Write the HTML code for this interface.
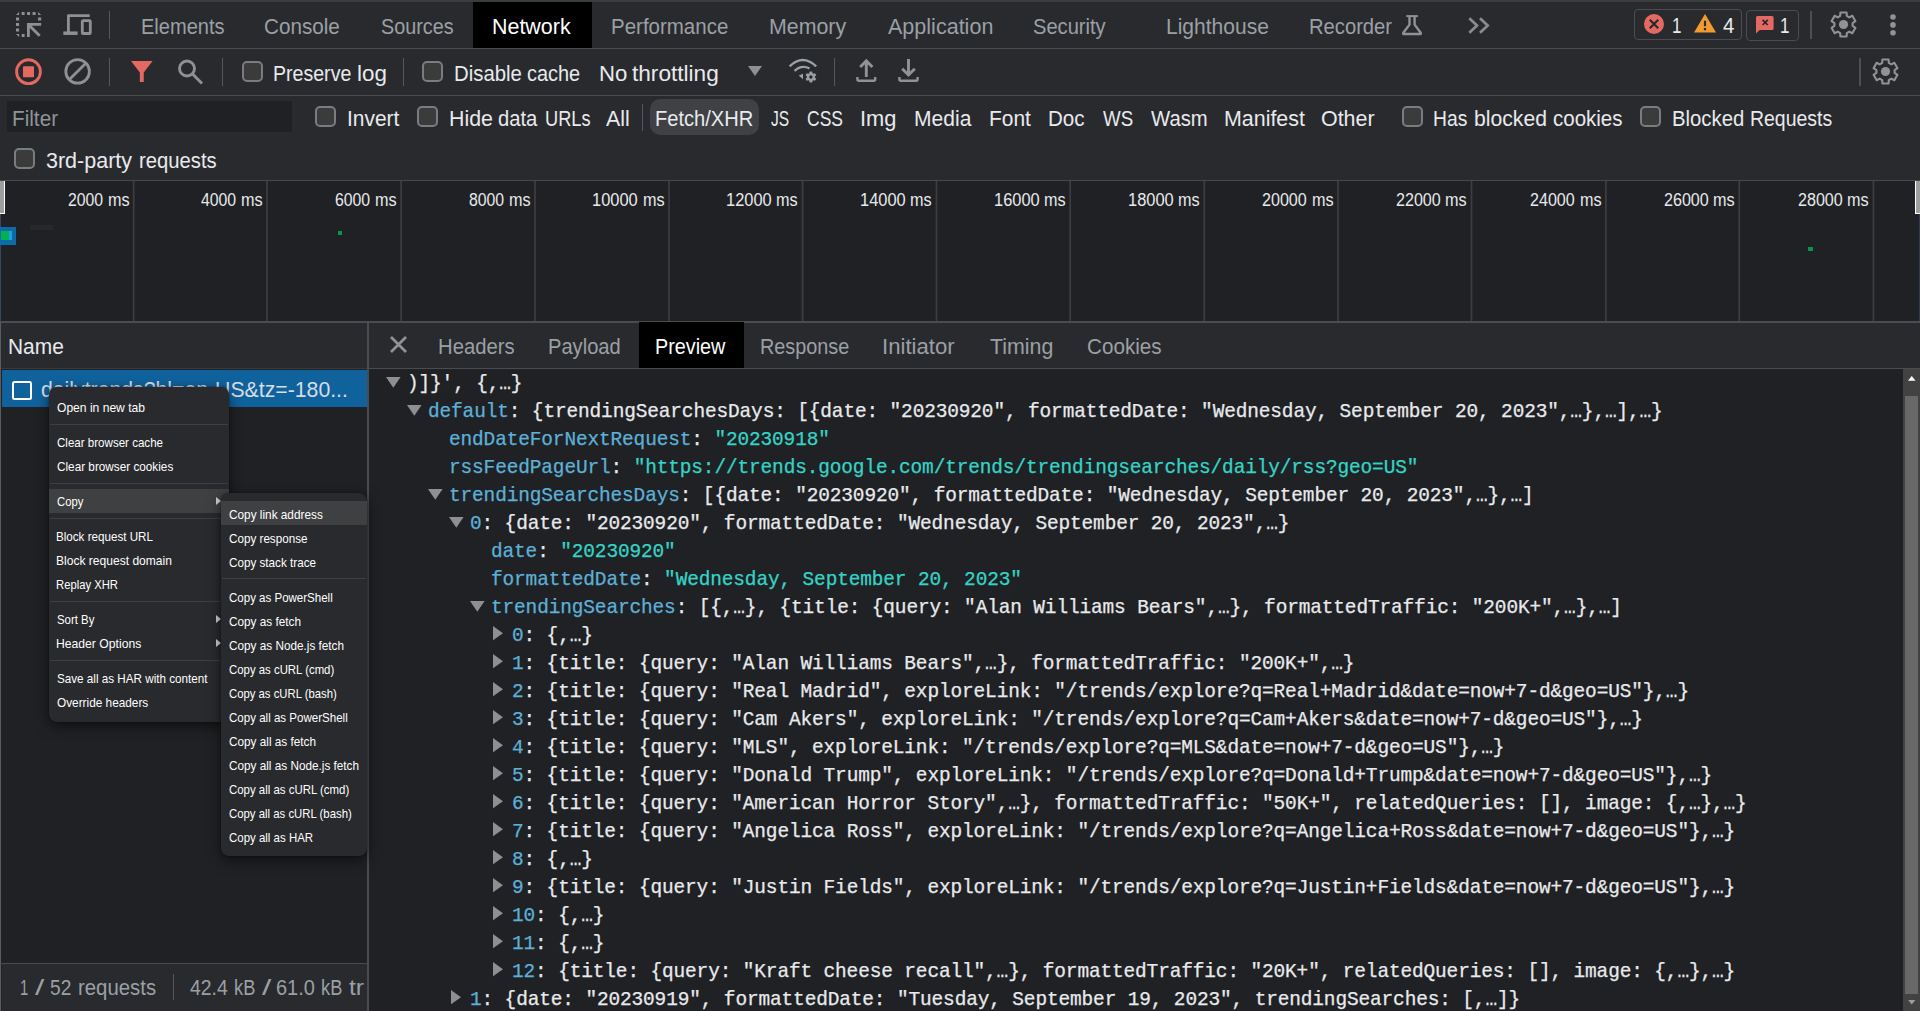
<!DOCTYPE html>
<html lang="en"><head><meta charset="utf-8"><title>DevTools - Network</title>
<style>
html,body{margin:0;padding:0;background:#202124;overflow:hidden}
body{width:1920px;height:1011px;position:relative;font-family:"Liberation Sans",sans-serif;color:#e8eaed}
.a{position:absolute}
.t{position:absolute;white-space:pre;line-height:28px;height:28px;font-family:"Liberation Sans",sans-serif;transform-origin:0 0}
.jr{position:absolute;white-space:pre;line-height:28px;height:28px;font-family:"Liberation Mono",monospace;font-size:19.45px;letter-spacing:-0.1259px;-webkit-text-stroke-width:0.25px}
.tri{position:absolute;fill:#8e8f91}
.bar{position:absolute;left:0;width:1920px;background:#292a2d}
.hl{position:absolute;background:#494c50}
.vd{position:absolute;width:1px;background:#54575b}
.cb{position:absolute;width:17px;height:17px;border:2px solid #797c80;border-radius:5px;background:#3b3b3c}
.gl{position:absolute;top:181px;width:2px;height:140px;background:#37383b}
.menu{position:absolute;background:#292a2d;border-radius:8px;box-shadow:0 4px 14px rgba(0,0,0,.55),0 0 2px rgba(0,0,0,.5)}
.sep{position:absolute;left:1px;right:1px;height:1px;background:#3c3f43}
.mh{position:absolute;left:0;right:0;height:24px;background:#3f4042}
svg{position:absolute;overflow:visible}
</style></head><body>
<!-- ===== main toolbar ===== -->
<div class="bar" style="top:0;height:48px"></div>
<div class="a" style="left:0;top:0;width:1920px;height:2px;background:#383d3d"></div>
<div class="a" style="left:473px;top:2px;width:119px;height:45.700px;background:#000"></div>
<div class="vd" style="left:109px;top:11px;height:28px"></div>
<div class="vd" style="left:1810px;top:11px;height:28px;width:2px;background:#4b4e52"></div>
<!-- icons row1 -->
<svg style="left:15.800px;top:12px" width="25.200" height="25" viewBox="0 0 25.2 25" fill="#8f9093"><path d="M3.100 0V3H0ZM5.700 0h2.900v3h-2.900ZM11.100 0h3v3h-3ZM16.600 0h3v3h-3ZM22.100 0L25.200 3h-3.100ZM0 5.500h3.100v2.900H0ZM0 11h3.100v3H0ZM0 16.500h3.100v2.900H0ZM0 22h3.100v3ZM22.100 5.500h3.100v2.900h-3.100ZM5.700 22h2.900v3h-2.900ZM11 10.900H25.200V13.700H15.600L24.700 22.800L22.700 24.800L13.800 15.900V25H11Z"/></svg>
<svg style="left:63px;top:14px" width="29" height="21" viewBox="0 0 29 21" fill="none" stroke="#8f9093" stroke-width="2.800"><path d="M5.400 18V1.700H26.700" stroke-linejoin="round"/><path d="M0.300 19.200H14.600" stroke-width="3.500"/><rect x="19.300" y="6.700" width="8" height="12.800" rx="0.800"/></svg>
<svg style="left:1401px;top:14px" width="22" height="22" viewBox="0 0 22 22" fill="none" stroke="#919294" stroke-linejoin="round"><path d="M5.300 2.100H16.900" stroke-width="2"/><path d="M8.500 2.500V10.600L2.300 18.800Q1.500 20 3 20H19Q20.500 20 19.700 18.800L13.600 10.600V2.500" stroke-width="2.400"/></svg>
<svg style="left:1466.500px;top:16px" width="24" height="20" viewBox="0 0 24 20" fill="none" stroke="#8b8c8e" stroke-width="2.700"><path d="M2.300 2.200L10 9.500L2.300 16.800M13 2.200L20.700 9.500L13 16.800"/></svg>
<!-- counters -->
<div class="a" style="left:1634px;top:9px;width:106px;height:29px;border:1px solid #4a4c50;border-radius:4px"></div>
<div class="a" style="left:1746px;top:10px;width:51px;height:28.500px;border:1px solid #4a4c50;border-radius:4px"></div>
<svg style="left:1644px;top:14px" width="20" height="20" viewBox="0 0 20 20"><circle cx="10" cy="10" r="10" fill="#e46962"/><path d="M5.8 5.8L14.2 14.2M14.2 5.8L5.8 14.2" stroke="#292a2d" stroke-width="2.2"/></svg>
<svg style="left:1694px;top:14.300px" width="22" height="18.500" preserveAspectRatio="none" viewBox="0 0 22 18"><path d="M11 0L22 18H0Z" fill="#f29b30"/><path d="M11 6.5V12M11 13.6V15.8" stroke="#292a2d" stroke-width="2.2"/></svg>
<svg style="left:1755.800px;top:16px" width="17.600" height="17.500" viewBox="0 0 17.6 17.5"><path d="M1.500 0H16.100Q17.600 0 17.600 1.500V12.500Q17.600 14 16.100 14H3.700L0 17.500V1.500Q0 0 1.500 0Z" fill="#e46962"/><path d="M6.600 3.800L11.800 9M11.800 3.800L6.600 9" stroke="#292a2d" stroke-width="1.700"/></svg>
<svg style="left:1830px;top:11px" width="27" height="27" viewBox="0 0 27 27"><path d="M16.80 4.91L16.60 1.49L10.40 1.49L10.20 4.91L7.71 6.35L4.66 4.81L1.55 10.19L4.41 12.06L4.41 14.94L1.55 16.81L4.66 22.19L7.71 20.65L10.20 22.09L10.40 25.51L16.60 25.51L16.80 22.09L19.29 20.65L22.34 22.19L25.45 16.81L22.59 14.94L22.59 12.06L25.45 10.19L22.34 4.81L19.29 6.35Z" fill="none" stroke="#919294" stroke-width="2.1" stroke-linejoin="round"/><circle cx="13.5" cy="13.5" r="4.6" fill="#919294"/></svg>
<svg style="left:1889.600px;top:13.600px" width="6" height="22" viewBox="0 0 6 22" fill="#919294"><circle cx="3" cy="3" r="2.8"/><circle cx="3" cy="10.900" r="2.8"/><circle cx="3" cy="18.800" r="2.8"/></svg>

<!-- ===== network toolbar ===== -->
<div class="bar" style="top:48px;height:47px"></div>
<svg style="left:15px;top:58px" width="27" height="27" viewBox="0 0 27 27"><circle cx="13.5" cy="13.700" r="11.900" fill="none" stroke="#e46962" stroke-width="2.900"/><rect x="8" y="8.200" width="11" height="11" rx="0.800" fill="#e46962"/></svg>
<svg style="left:64px;top:58.200px" width="27" height="27" viewBox="0 0 27 27" fill="none" stroke="#8f9093" stroke-width="2.800"><circle cx="13.600" cy="13.400" r="11.800"/><path d="M5.400 21.600L21.800 5.200"/></svg>
<div class="vd" style="left:109px;top:58px;height:28px"></div>
<svg style="left:130.700px;top:61px" width="21.600" height="21" viewBox="0 0 21.6 21"><path d="M0 0H21.600L12.750 11.500V21H8.850V11.500Z" fill="#e46962"/></svg>
<svg style="left:178px;top:58.500px" width="26" height="26" viewBox="0 0 26 26" fill="none" stroke="#8f9093"><circle cx="9" cy="9.500" r="7.500" stroke-width="2.900"/><path d="M14.300 14.800L24 24.500" stroke-width="3"/></svg>
<div class="vd" style="left:222px;top:58px;height:28px"></div>
<div class="cb" style="left:242px;top:61px"></div>
<div class="vd" style="left:403px;top:58px;height:28px"></div>
<div class="cb" style="left:422px;top:61px"></div>
<svg style="left:748px;top:66px" width="14" height="10" viewBox="0 0 14 10"><path d="M0 0H14L7 10Z" fill="#8f9093"/></svg>
<svg style="left:788px;top:58px" width="30" height="26" viewBox="0 0 30 26"><path d="M1.600 8.300Q14.700 -4.200 28.200 8.300" fill="none" stroke="#9aa0a6" stroke-width="2.400"/><path d="M6.600 13Q13 6.500 21.500 10.300" fill="none" stroke="#9aa0a6" stroke-width="2.400"/><path d="M10.700 17.400L15 15.800V21.200Z" fill="#9aa0a6"/><path d="M24.53 15.35L24.16 13.54L21.64 13.54L21.27 15.35L20.55 15.76L18.80 15.18L17.54 17.36L18.92 18.58L18.92 19.42L17.54 20.64L18.80 22.82L20.55 22.24L21.27 22.65L21.64 24.46L24.16 24.46L24.53 22.65L25.25 22.24L27.00 22.82L28.26 20.64L26.88 19.42L26.88 18.58L28.26 17.36L27.00 15.18L25.25 15.76ZM24.600 19a1.700 1.700 0 1 0 -3.400 0a1.700 1.700 0 1 0 3.400 0Z" fill="#9aa0a6" fill-rule="evenodd"/></svg>
<div class="vd" style="left:834px;top:58px;height:28px"></div>
<svg style="left:855px;top:58px" width="23" height="25" viewBox="0 0 23 25" fill="none" stroke="#919294"><path d="M11.300 19V2.500M5.200 9L11.300 2.900L17.400 9" stroke-width="2.900"/><path d="M2.400 19V21.300Q2.400 22.800 3.900 22.800H18.700Q20.200 22.800 20.200 21.300V19" stroke-width="2.400"/></svg>
<svg style="left:897px;top:58px" width="23" height="25" viewBox="0 0 23 25" fill="none" stroke="#919294"><path d="M11.500 1V17M5.200 10.700L11.500 17L17.800 10.700" stroke-width="2.900"/><path d="M2.400 19V21.300Q2.400 22.800 3.900 22.800H19.100Q20.600 22.800 20.600 21.300V19" stroke-width="2.400"/></svg>
<div class="vd" style="left:1859px;top:58px;height:28px;width:2px;background:#4b4e52"></div>
<svg style="left:1872px;top:58px" width="27" height="27" viewBox="0 0 27 27"><path d="M16.80 4.91L16.60 1.49L10.40 1.49L10.20 4.91L7.71 6.35L4.66 4.81L1.55 10.19L4.41 12.06L4.41 14.94L1.55 16.81L4.66 22.19L7.71 20.65L10.20 22.09L10.40 25.51L16.60 25.51L16.80 22.09L19.29 20.65L22.34 22.19L25.45 16.81L22.59 14.94L22.59 12.06L25.45 10.19L22.34 4.81L19.29 6.35Z" fill="none" stroke="#919294" stroke-width="2.1" stroke-linejoin="round"/><circle cx="13.5" cy="13.5" r="4.6" fill="#919294"/></svg>

<!-- ===== filter bar ===== -->
<div class="bar" style="top:96px;height:84px"></div>
<div class="a" style="left:7px;top:101px;width:285px;height:31px;background:#202124"></div>
<div class="cb" style="left:315px;top:106px"></div>
<div class="cb" style="left:417px;top:106px"></div>
<div class="vd" style="left:642px;top:104px;height:27px"></div>
<div class="a" style="left:650px;top:99px;width:109px;height:36px;border-radius:10px;background:#404144"></div>
<div class="cb" style="left:1402px;top:106px"></div>
<div class="cb" style="left:1640px;top:106px"></div>
<div class="cb" style="left:14px;top:148px"></div>

<div class="hl" style="left:0;top:48px;width:1920px;height:1px"></div>
<div class="hl" style="left:0;top:95px;width:1920px;height:1px"></div>
<!-- ===== timeline overview ===== -->
<div class="hl" style="left:0;top:180px;width:1920px;height:1px;background:#46494d"></div>
<div class="a" style="left:0;top:181px;width:1920px;height:140px;background:#202124"></div>
<svg style="left:0;top:181px" width="1920" height="140" viewBox="0 0 1920 140" fill="#3c3d41"><rect x="132.80" y="0" width="1.75" height="140"/><rect x="266.10" y="0" width="1.75" height="140"/><rect x="400.30" y="0" width="1.75" height="140"/><rect x="534.10" y="0" width="1.75" height="140"/><rect x="668.10" y="0" width="1.75" height="140"/><rect x="801.70" y="0" width="1.75" height="140"/><rect x="935.60" y="0" width="1.75" height="140"/><rect x="1069.30" y="0" width="1.75" height="140"/><rect x="1203.40" y="0" width="1.75" height="140"/><rect x="1337.10" y="0" width="1.75" height="140"/><rect x="1470.60" y="0" width="1.75" height="140"/><rect x="1605.00" y="0" width="1.75" height="140"/><rect x="1738.40" y="0" width="1.75" height="140"/><rect x="1872.60" y="0" width="1.75" height="140"/></svg>
<div class="a" style="left:0;top:181px;width:4px;height:32px;background:#9e9e9e;border-right:1px solid #fff;border-bottom:1px solid #fff"></div>
<div class="a" style="left:1915px;top:181px;width:5px;height:32px;background:#9e9e9e;border-left:1px solid #fff;border-bottom:1px solid #fff"></div>
<div class="a" style="left:1919px;top:214px;width:1px;height:107px;background:#2c3b5a"></div>
<div class="a" style="left:0;top:214px;width:1px;height:107px;background:#364763"></div>
<div class="a" style="left:0;top:227px;width:15.5px;height:18px;background:#0f6aa8"></div>
<div class="a" style="left:1px;top:231px;width:7.5px;height:8.5px;background:#00b14f"></div>
<div class="a" style="left:8.5px;top:231px;width:3.2px;height:8.5px;background:#1ba1e9"></div>
<div class="a" style="left:30px;top:225px;width:23px;height:4.500px;background:#27282b"></div>
<div class="a" style="left:337.500px;top:230.500px;width:4.500px;height:4px;background:#00994a"></div>
<div class="a" style="left:1808px;top:246.500px;width:4.500px;height:4px;background:#00994a"></div>

<!-- ===== request list (left) ===== -->
<div class="hl" style="left:0;top:321px;width:1920px;height:1.5px"></div>
<div class="a" style="left:0;top:322.500px;width:367px;height:46px;background:#292a2d"></div>
<div class="hl" style="left:0;top:368px;width:367px;height:1px;background:#3a3b3f"></div>
<div class="a" style="left:1.5px;top:369.500px;width:365.5px;height:37.500px;background:#10629d"></div>
<div class="a" style="left:12px;top:381px;width:16px;height:14.500px;border:2px solid #fff;border-radius:2.5px"></div>
<div class="a" style="left:0;top:322px;width:1px;height:689px;background:#595c60"></div>
<div class="hl" style="left:367px;top:322px;width:2px;height:689px"></div>
<div class="a" style="left:1.5px;top:963px;width:365.5px;height:48px;background:#292a2d"></div>
<div class="hl" style="left:0;top:963px;width:367px;height:1px"></div>
<div class="vd" style="left:173px;top:974px;height:26px"></div>

<!-- ===== detail pane (right) ===== -->
<div class="a" style="left:369px;top:322.500px;width:1551px;height:45.500px;background:#292a2d"></div>
<div class="a" style="left:639px;top:322px;width:105px;height:46px;background:#000"></div>
<div class="hl" style="left:369px;top:368px;width:1551px;height:1.2px"></div>
<svg style="left:390px;top:336px" width="17" height="17" viewBox="0 0 17 17" stroke="#919294" stroke-width="2.800" fill="none"><path d="M1 1L16 16M16 1L1 16"/></svg>
<!-- scrollbar -->
<div class="a" style="left:1903px;top:369px;width:17px;height:642px;background:#424242"></div>
<div class="a" style="left:1905px;top:396px;width:13px;height:598px;background:#686868"></div>
<svg style="left:1907.800px;top:375.500px" width="7.5" height="4.700" viewBox="0 0 8 5"><path d="M0 5H8L4 0Z" fill="#fff"/></svg>
<svg style="left:1907.800px;top:1000px" width="7.5" height="4.500" viewBox="0 0 8 5"><path d="M0 0H8L4 5Z" fill="#9e9e9e"/></svg>

<svg class="tri" style="left:385.5px;top:377.2px" width="14.6" height="10.8" viewBox="0 0 14 10" preserveAspectRatio="none"><path d="M0 0H14L7 10Z"/></svg><div class="jr" style="left:407px;top:370px"><span style="color:#e8eaed">)]}&#x27;, {,…}</span></div>
<svg class="tri" style="left:406.5px;top:405.2px" width="14.6" height="10.8" viewBox="0 0 14 10" preserveAspectRatio="none"><path d="M0 0H14L7 10Z"/></svg><div class="jr" style="left:428px;top:398px"><span style="color:#5db0d7">default</span><span style="color:#e8eaed">: {trendingSearchesDays: [{date: &quot;20230920&quot;, formattedDate: &quot;Wednesday, September 20, 2023&quot;,…},…],…}</span></div>
<div class="jr" style="left:449px;top:426px"><span style="color:#5db0d7">endDateForNextRequest</span><span style="color:#e8eaed">: </span><span style="color:#35d4c7">&quot;20230918&quot;</span></div>
<div class="jr" style="left:449px;top:454px"><span style="color:#5db0d7">rssFeedPageUrl</span><span style="color:#e8eaed">: </span><span style="color:#35d4c7">&quot;https://trends.google.com/trends/trendingsearches/daily/rss?geo=US&quot;</span></div>
<svg class="tri" style="left:427.5px;top:489.2px" width="14.6" height="10.8" viewBox="0 0 14 10" preserveAspectRatio="none"><path d="M0 0H14L7 10Z"/></svg><div class="jr" style="left:449px;top:482px"><span style="color:#5db0d7">trendingSearchesDays</span><span style="color:#e8eaed">: [{date: &quot;20230920&quot;, formattedDate: &quot;Wednesday, September 20, 2023&quot;,…},…]</span></div>
<svg class="tri" style="left:448.5px;top:517.2px" width="14.6" height="10.8" viewBox="0 0 14 10" preserveAspectRatio="none"><path d="M0 0H14L7 10Z"/></svg><div class="jr" style="left:470px;top:510px"><span style="color:#5db0d7">0</span><span style="color:#e8eaed">: {date: &quot;20230920&quot;, formattedDate: &quot;Wednesday, September 20, 2023&quot;,…}</span></div>
<div class="jr" style="left:491px;top:538px"><span style="color:#5db0d7">date</span><span style="color:#e8eaed">: </span><span style="color:#35d4c7">&quot;20230920&quot;</span></div>
<div class="jr" style="left:491px;top:566px"><span style="color:#5db0d7">formattedDate</span><span style="color:#e8eaed">: </span><span style="color:#35d4c7">&quot;Wednesday, September 20, 2023&quot;</span></div>
<svg class="tri" style="left:469.5px;top:601.2px" width="14.6" height="10.8" viewBox="0 0 14 10" preserveAspectRatio="none"><path d="M0 0H14L7 10Z"/></svg><div class="jr" style="left:491px;top:594px"><span style="color:#5db0d7">trendingSearches</span><span style="color:#e8eaed">: [{,…}, {title: {query: &quot;Alan Williams Bears&quot;,…}, formattedTraffic: &quot;200K+&quot;,…},…]</span></div>
<svg class="tri" style="left:493px;top:626px" width="10" height="14.3" viewBox="0 0 10 14" preserveAspectRatio="none"><path d="M0 0L10 7L0 14Z"/></svg><div class="jr" style="left:512px;top:622px"><span style="color:#5db0d7">0</span><span style="color:#e8eaed">: {,…}</span></div>
<svg class="tri" style="left:493px;top:654px" width="10" height="14.3" viewBox="0 0 10 14" preserveAspectRatio="none"><path d="M0 0L10 7L0 14Z"/></svg><div class="jr" style="left:512px;top:650px"><span style="color:#5db0d7">1</span><span style="color:#e8eaed">: {title: {query: &quot;Alan Williams Bears&quot;,…}, formattedTraffic: &quot;200K+&quot;,…}</span></div>
<svg class="tri" style="left:493px;top:682px" width="10" height="14.3" viewBox="0 0 10 14" preserveAspectRatio="none"><path d="M0 0L10 7L0 14Z"/></svg><div class="jr" style="left:512px;top:678px"><span style="color:#5db0d7">2</span><span style="color:#e8eaed">: {title: {query: &quot;Real Madrid&quot;, exploreLink: &quot;/trends/explore?q=Real+Madrid&amp;date=now+7-d&amp;geo=US&quot;},…}</span></div>
<svg class="tri" style="left:493px;top:710px" width="10" height="14.3" viewBox="0 0 10 14" preserveAspectRatio="none"><path d="M0 0L10 7L0 14Z"/></svg><div class="jr" style="left:512px;top:706px"><span style="color:#5db0d7">3</span><span style="color:#e8eaed">: {title: {query: &quot;Cam Akers&quot;, exploreLink: &quot;/trends/explore?q=Cam+Akers&amp;date=now+7-d&amp;geo=US&quot;},…}</span></div>
<svg class="tri" style="left:493px;top:738px" width="10" height="14.3" viewBox="0 0 10 14" preserveAspectRatio="none"><path d="M0 0L10 7L0 14Z"/></svg><div class="jr" style="left:512px;top:734px"><span style="color:#5db0d7">4</span><span style="color:#e8eaed">: {title: {query: &quot;MLS&quot;, exploreLink: &quot;/trends/explore?q=MLS&amp;date=now+7-d&amp;geo=US&quot;},…}</span></div>
<svg class="tri" style="left:493px;top:766px" width="10" height="14.3" viewBox="0 0 10 14" preserveAspectRatio="none"><path d="M0 0L10 7L0 14Z"/></svg><div class="jr" style="left:512px;top:762px"><span style="color:#5db0d7">5</span><span style="color:#e8eaed">: {title: {query: &quot;Donald Trump&quot;, exploreLink: &quot;/trends/explore?q=Donald+Trump&amp;date=now+7-d&amp;geo=US&quot;},…}</span></div>
<svg class="tri" style="left:493px;top:794px" width="10" height="14.3" viewBox="0 0 10 14" preserveAspectRatio="none"><path d="M0 0L10 7L0 14Z"/></svg><div class="jr" style="left:512px;top:790px"><span style="color:#5db0d7">6</span><span style="color:#e8eaed">: {title: {query: &quot;American Horror Story&quot;,…}, formattedTraffic: &quot;50K+&quot;, relatedQueries: [], image: {,…},…}</span></div>
<svg class="tri" style="left:493px;top:822px" width="10" height="14.3" viewBox="0 0 10 14" preserveAspectRatio="none"><path d="M0 0L10 7L0 14Z"/></svg><div class="jr" style="left:512px;top:818px"><span style="color:#5db0d7">7</span><span style="color:#e8eaed">: {title: {query: &quot;Angelica Ross&quot;, exploreLink: &quot;/trends/explore?q=Angelica+Ross&amp;date=now+7-d&amp;geo=US&quot;},…}</span></div>
<svg class="tri" style="left:493px;top:850px" width="10" height="14.3" viewBox="0 0 10 14" preserveAspectRatio="none"><path d="M0 0L10 7L0 14Z"/></svg><div class="jr" style="left:512px;top:846px"><span style="color:#5db0d7">8</span><span style="color:#e8eaed">: {,…}</span></div>
<svg class="tri" style="left:493px;top:878px" width="10" height="14.3" viewBox="0 0 10 14" preserveAspectRatio="none"><path d="M0 0L10 7L0 14Z"/></svg><div class="jr" style="left:512px;top:874px"><span style="color:#5db0d7">9</span><span style="color:#e8eaed">: {title: {query: &quot;Justin Fields&quot;, exploreLink: &quot;/trends/explore?q=Justin+Fields&amp;date=now+7-d&amp;geo=US&quot;},…}</span></div>
<svg class="tri" style="left:493px;top:906px" width="10" height="14.3" viewBox="0 0 10 14" preserveAspectRatio="none"><path d="M0 0L10 7L0 14Z"/></svg><div class="jr" style="left:512px;top:902px"><span style="color:#5db0d7">10</span><span style="color:#e8eaed">: {,…}</span></div>
<svg class="tri" style="left:493px;top:934px" width="10" height="14.3" viewBox="0 0 10 14" preserveAspectRatio="none"><path d="M0 0L10 7L0 14Z"/></svg><div class="jr" style="left:512px;top:930px"><span style="color:#5db0d7">11</span><span style="color:#e8eaed">: {,…}</span></div>
<svg class="tri" style="left:493px;top:962px" width="10" height="14.3" viewBox="0 0 10 14" preserveAspectRatio="none"><path d="M0 0L10 7L0 14Z"/></svg><div class="jr" style="left:512px;top:958px"><span style="color:#5db0d7">12</span><span style="color:#e8eaed">: {title: {query: &quot;Kraft cheese recall&quot;,…}, formattedTraffic: &quot;20K+&quot;, relatedQueries: [], image: {,…},…}</span></div>
<svg class="tri" style="left:451px;top:990px" width="10" height="14.3" viewBox="0 0 10 14" preserveAspectRatio="none"><path d="M0 0L10 7L0 14Z"/></svg><div class="jr" style="left:470px;top:986px"><span style="color:#5db0d7">1</span><span style="color:#e8eaed">: {date: &quot;20230919&quot;, formattedDate: &quot;Tuesday, September 19, 2023&quot;, trendingSearches: [,…]}</span></div>
<span class="t" style="left:140.76px;top:13.00px;font-size:21.3px;color:#9aa0a6;transform:scaleX(0.9412);">Elements</span>
<span class="t" style="left:264.03px;top:13.00px;font-size:21.3px;color:#9aa0a6;transform:scaleX(0.9699);">Console</span>
<span class="t" style="left:380.50px;top:13.00px;font-size:21.3px;color:#9aa0a6;transform:scaleX(0.9293);">Sources</span>
<span class="t" style="left:491.99px;top:13.00px;font-size:21.3px;color:#ffffff;transform:scaleX(1.0070);">Network</span>
<span class="t" style="left:611.04px;top:13.00px;font-size:21.3px;color:#9aa0a6;transform:scaleX(0.9619);">Performance</span>
<span class="t" style="left:768.50px;top:13.00px;font-size:21.3px;color:#9aa0a6;transform:scaleX(1.0031);">Memory</span>
<span class="t" style="left:888.00px;top:13.00px;font-size:21.3px;color:#9aa0a6;transform:scaleX(1.0112);">Application</span>
<span class="t" style="left:1033.00px;top:13.00px;font-size:21.3px;color:#9aa0a6;transform:scaleX(0.9446);">Security</span>
<span class="t" style="left:1166.01px;top:13.00px;font-size:21.3px;color:#9aa0a6;transform:scaleX(0.9867);">Lighthouse</span>
<span class="t" style="left:1309.05px;top:13.00px;font-size:21.3px;color:#9aa0a6;transform:scaleX(0.9480);">Recorder</span>
<span class="t" style="left:1671.70px;top:12.00px;font-size:21.3px;color:#e8eaed;transform:scaleX(0.8000);">1</span>
<span class="t" style="left:1722.50px;top:12.00px;font-size:21.3px;color:#e8eaed;transform:scaleX(0.9583);">4</span>
<span class="t" style="left:1780.20px;top:12.00px;font-size:21.3px;color:#e8eaed;transform:scaleX(0.8000);">1</span>
<span class="t" style="left:273.28px;top:60.00px;font-size:21.3px;color:#e8eaed;transform:scaleX(0.9187);">Preserve</span><span class="t" style="left:356.85px;top:60.00px;font-size:21.3px;color:#e8eaed;transform:scaleX(1.0498);">log</span>
<span class="t" style="left:453.54px;top:60.00px;font-size:21.3px;color:#e8eaed;transform:scaleX(0.9555);">Disable</span><span class="t" style="left:527.20px;top:60.00px;font-size:21.3px;color:#e8eaed;transform:scaleX(0.9360);">cache</span>
<span class="t" style="left:598.56px;top:60.00px;font-size:21.3px;color:#e8eaed;transform:scaleX(1.0402);">No</span><span class="t" style="left:632.10px;top:60.00px;font-size:21.3px;color:#e8eaed;transform:scaleX(1.0614);">throttling</span>
<span class="t" style="left:12.03px;top:105.00px;font-size:21.3px;color:#8f9499;transform:scaleX(0.9733);">Filter</span>
<span class="t" style="left:346.52px;top:105.00px;font-size:21.3px;color:#e8eaed;transform:scaleX(0.9838);">Invert</span>
<span class="t" style="left:448.60px;top:105.00px;font-size:21.3px;color:#e8eaed;transform:scaleX(1.0034);">Hide</span><span class="t" style="left:498.00px;top:105.00px;font-size:21.3px;color:#e8eaed;transform:scaleX(0.9494);">data</span><span class="t" style="left:544.54px;top:105.00px;font-size:21.3px;color:#e8eaed;transform:scaleX(0.8565);">URLs</span>
<span class="t" style="left:606.00px;top:105.00px;font-size:21.3px;color:#e8eaed;transform:scaleX(1.0028);">All</span>
<span class="t" style="left:655.06px;top:105.00px;font-size:21.3px;color:#e8eaed;transform:scaleX(0.9439);">Fetch/XHR</span>
<span class="t" style="left:771.00px;top:105.00px;font-size:21.3px;color:#e8eaed;transform:scaleX(0.7303);">JS</span>
<span class="t" style="left:806.68px;top:105.00px;font-size:21.3px;color:#e8eaed;transform:scaleX(0.8219);">CSS</span>
<span class="t" style="left:859.97px;top:105.00px;font-size:21.3px;color:#e8eaed;transform:scaleX(1.0250);">Img</span>
<span class="t" style="left:913.51px;top:105.00px;font-size:21.3px;color:#e8eaed;transform:scaleX(0.9884);">Media</span>
<span class="t" style="left:989.02px;top:105.00px;font-size:21.3px;color:#e8eaed;transform:scaleX(0.9833);">Font</span>
<span class="t" style="left:1048.03px;top:105.00px;font-size:21.3px;color:#e8eaed;transform:scaleX(0.9671);">Doc</span>
<span class="t" style="left:1102.50px;top:105.00px;font-size:21.3px;color:#e8eaed;transform:scaleX(0.8797);">WS</span>
<span class="t" style="left:1151.00px;top:105.00px;font-size:21.3px;color:#e8eaed;transform:scaleX(0.9523);">Wasm</span>
<span class="t" style="left:1223.99px;top:105.00px;font-size:21.3px;color:#e8eaed;transform:scaleX(1.0054);">Manifest</span>
<span class="t" style="left:1321.49px;top:105.00px;font-size:21.3px;color:#e8eaed;transform:scaleX(1.0063);">Other</span>
<span class="t" style="left:1433.39px;top:105.00px;font-size:21.3px;color:#e8eaed;transform:scaleX(0.9055);">Has</span><span class="t" style="left:1473.81px;top:105.00px;font-size:21.3px;color:#e8eaed;transform:scaleX(0.9936);">blocked</span><span class="t" style="left:1553.00px;top:105.00px;font-size:21.3px;color:#e8eaed;transform:scaleX(0.9628);">cookies</span>
<span class="t" style="left:1671.75px;top:105.00px;font-size:21.3px;color:#e8eaed;transform:scaleX(0.9537);">Blocked</span><span class="t" style="left:1750.49px;top:105.00px;font-size:21.3px;color:#e8eaed;transform:scaleX(0.9126);">Requests</span>
<span class="t" style="left:46.10px;top:147.00px;font-size:21.3px;color:#e8eaed;transform:scaleX(1.0097);">3rd-party</span><span class="t" style="left:139.05px;top:147.00px;font-size:21.3px;color:#e8eaed;transform:scaleX(0.9508);">requests</span>
<span class="t" style="left:67.60px;top:186.00px;font-size:17.5px;color:#e8eaed;transform:scaleX(0.9031);">2000</span><span class="t" style="left:107.57px;top:186.00px;font-size:17.5px;color:#e8eaed;transform:scaleX(0.9257);">ms</span>
<span class="t" style="left:200.90px;top:186.00px;font-size:17.5px;color:#e8eaed;transform:scaleX(0.9031);">4000</span><span class="t" style="left:240.87px;top:186.00px;font-size:17.5px;color:#e8eaed;transform:scaleX(0.9257);">ms</span>
<span class="t" style="left:335.10px;top:186.00px;font-size:17.5px;color:#e8eaed;transform:scaleX(0.9031);">6000</span><span class="t" style="left:375.07px;top:186.00px;font-size:17.5px;color:#e8eaed;transform:scaleX(0.9257);">ms</span>
<span class="t" style="left:468.90px;top:186.00px;font-size:17.5px;color:#e8eaed;transform:scaleX(0.9031);">8000</span><span class="t" style="left:508.87px;top:186.00px;font-size:17.5px;color:#e8eaed;transform:scaleX(0.9257);">ms</span>
<span class="t" style="left:592.36px;top:186.00px;font-size:17.5px;color:#e8eaed;transform:scaleX(0.9389);">10000</span><span class="t" style="left:642.87px;top:186.00px;font-size:17.5px;color:#e8eaed;transform:scaleX(0.9257);">ms</span>
<span class="t" style="left:725.96px;top:186.00px;font-size:17.5px;color:#e8eaed;transform:scaleX(0.9389);">12000</span><span class="t" style="left:776.47px;top:186.00px;font-size:17.5px;color:#e8eaed;transform:scaleX(0.9257);">ms</span>
<span class="t" style="left:859.86px;top:186.00px;font-size:17.5px;color:#e8eaed;transform:scaleX(0.9389);">14000</span><span class="t" style="left:910.37px;top:186.00px;font-size:17.5px;color:#e8eaed;transform:scaleX(0.9257);">ms</span>
<span class="t" style="left:993.56px;top:186.00px;font-size:17.5px;color:#e8eaed;transform:scaleX(0.9389);">16000</span><span class="t" style="left:1044.07px;top:186.00px;font-size:17.5px;color:#e8eaed;transform:scaleX(0.9257);">ms</span>
<span class="t" style="left:1127.66px;top:186.00px;font-size:17.5px;color:#e8eaed;transform:scaleX(0.9389);">18000</span><span class="t" style="left:1178.17px;top:186.00px;font-size:17.5px;color:#e8eaed;transform:scaleX(0.9257);">ms</span>
<span class="t" style="left:1262.30px;top:186.00px;font-size:17.5px;color:#e8eaed;transform:scaleX(0.9197);">20000</span><span class="t" style="left:1311.87px;top:186.00px;font-size:17.5px;color:#e8eaed;transform:scaleX(0.9257);">ms</span>
<span class="t" style="left:1395.80px;top:186.00px;font-size:17.5px;color:#e8eaed;transform:scaleX(0.9197);">22000</span><span class="t" style="left:1445.37px;top:186.00px;font-size:17.5px;color:#e8eaed;transform:scaleX(0.9257);">ms</span>
<span class="t" style="left:1530.20px;top:186.00px;font-size:17.5px;color:#e8eaed;transform:scaleX(0.9197);">24000</span><span class="t" style="left:1579.77px;top:186.00px;font-size:17.5px;color:#e8eaed;transform:scaleX(0.9257);">ms</span>
<span class="t" style="left:1663.60px;top:186.00px;font-size:17.5px;color:#e8eaed;transform:scaleX(0.9197);">26000</span><span class="t" style="left:1713.17px;top:186.00px;font-size:17.5px;color:#e8eaed;transform:scaleX(0.9257);">ms</span>
<span class="t" style="left:1797.80px;top:186.00px;font-size:17.5px;color:#e8eaed;transform:scaleX(0.9197);">28000</span><span class="t" style="left:1847.37px;top:186.00px;font-size:17.5px;color:#e8eaed;transform:scaleX(0.9257);">ms</span>
<span class="t" style="left:8.02px;top:333.00px;font-size:21.3px;color:#e8eaed;transform:scaleX(0.9824);">Name</span>
<span class="t" style="left:438.05px;top:333.00px;font-size:21.3px;color:#9aa0a6;transform:scaleX(0.9512);">Headers</span>
<span class="t" style="left:548.05px;top:333.00px;font-size:21.3px;color:#9aa0a6;transform:scaleX(0.9452);">Payload</span>
<span class="t" style="left:655.07px;top:333.00px;font-size:21.3px;color:#ffffff;transform:scaleX(0.9288);">Preview</span>
<span class="t" style="left:760.07px;top:333.00px;font-size:21.3px;color:#9aa0a6;transform:scaleX(0.9303);">Response</span>
<span class="t" style="left:882.46px;top:333.00px;font-size:21.3px;color:#9aa0a6;transform:scaleX(1.0400);">Initiator</span>
<span class="t" style="left:990.00px;top:333.00px;font-size:21.3px;color:#9aa0a6;transform:scaleX(1.0038);">Timing</span>
<span class="t" style="left:1086.53px;top:333.00px;font-size:21.3px;color:#9aa0a6;transform:scaleX(0.9695);">Cookies</span>
<span class="t" style="left:41.00px;top:376.00px;font-size:21.3px;color:#d6dde3;transform:scaleX(0.9971);">dailytrends?hl=en-US&amp;tz=-180...</span>
<span class="t" style="left:19.61px;top:974.00px;font-size:21.3px;color:#9aa0a6;transform:scaleX(0.6950);">1</span><span class="t" style="left:35.30px;top:974.00px;font-size:21.3px;color:#9aa0a6;transform:scaleX(1.5667);">/</span><span class="t" style="left:50.30px;top:974.00px;font-size:21.3px;color:#9aa0a6;transform:scaleX(0.9018);">52</span><span class="t" style="left:78.44px;top:974.00px;font-size:21.3px;color:#9aa0a6;transform:scaleX(0.9558);">requests</span>
<span class="t" style="left:189.60px;top:974.00px;font-size:21.3px;color:#9aa0a6;transform:scaleX(0.9109);">42.4</span><span class="t" style="left:234.14px;top:974.00px;font-size:21.3px;color:#9aa0a6;transform:scaleX(0.8584);">kB</span><span class="t" style="left:262.20px;top:974.00px;font-size:21.3px;color:#9aa0a6;transform:scaleX(1.5667);">/</span><span class="t" style="left:275.66px;top:974.00px;font-size:21.3px;color:#9aa0a6;transform:scaleX(0.9383);">61.0</span><span class="t" style="left:320.74px;top:974.00px;font-size:21.3px;color:#9aa0a6;transform:scaleX(0.8584);">kB</span><span class="t" style="left:348.50px;top:974.00px;font-size:21.3px;color:#9aa0a6;transform:scaleX(1.1613);">tr</span>

<!-- ===== context menu ===== -->
<div class="menu" style="left:49px;top:387px;width:180px;height:335px">
  <div class="sep" style="top:37px"></div>
  <div class="sep" style="top:96px"></div>
  <div class="mh" style="top:102px"></div>
  <div class="sep" style="top:131px"></div>
  <div class="sep" style="top:214px"></div>
  <div class="sep" style="top:273px"></div>
  <svg style="left:167px;top:110px" width="5" height="8" viewBox="0 0 5 8"><path d="M0 0L5 4L0 8Z" fill="#cfd0d2"/></svg>
  <svg style="left:167px;top:228px" width="5" height="8" viewBox="0 0 5 8"><path d="M0 0L5 4L0 8Z" fill="#cfd0d2"/></svg>
  <svg style="left:167px;top:252px" width="5" height="8" viewBox="0 0 5 8"><path d="M0 0L5 4L0 8Z" fill="#cfd0d2"/></svg>
</div>
<div class="menu" style="left:221px;top:493px;width:146px;height:363px">
  <div class="mh" style="top:8px"></div>
  <div class="sep" style="top:85px"></div>
</div>
<span class="t" style="left:57.00px;top:394.00px;font-size:12.6px;color:#ffffff;transform:scaleX(0.9595);">Open in new tab</span>
<span class="t" style="left:57.00px;top:429.00px;font-size:12.6px;color:#ffffff;transform:scaleX(0.9179);">Clear browser cache</span>
<span class="t" style="left:57.00px;top:453.00px;font-size:12.6px;color:#ffffff;transform:scaleX(0.9333);">Clear browser cookies</span>
<span class="t" style="left:57.00px;top:488.00px;font-size:12.6px;color:#ffffff;transform:scaleX(0.8969);">Copy</span>
<span class="t" style="left:56.08px;top:523.00px;font-size:12.6px;color:#ffffff;transform:scaleX(0.9232);">Block request URL</span>
<span class="t" style="left:56.04px;top:547.00px;font-size:12.6px;color:#ffffff;transform:scaleX(0.9575);">Block request domain</span>
<span class="t" style="left:56.11px;top:571.00px;font-size:12.6px;color:#ffffff;transform:scaleX(0.8945);">Replay XHR</span>
<span class="t" style="left:57.00px;top:606.00px;font-size:12.6px;color:#ffffff;transform:scaleX(0.9049);">Sort By</span>
<span class="t" style="left:56.03px;top:630.00px;font-size:12.6px;color:#ffffff;transform:scaleX(0.9665);">Header Options</span>
<span class="t" style="left:57.00px;top:665.00px;font-size:12.6px;color:#ffffff;transform:scaleX(0.9270);">Save all as HAR with content</span>
<span class="t" style="left:57.00px;top:689.00px;font-size:12.6px;color:#ffffff;transform:scaleX(0.9381);">Override headers</span>
<span class="t" style="left:229.00px;top:500.50px;font-size:12.6px;color:#ffffff;transform:scaleX(0.9369);">Copy link address</span>
<span class="t" style="left:229.00px;top:524.50px;font-size:12.6px;color:#ffffff;transform:scaleX(0.9268);">Copy response</span>
<span class="t" style="left:229.00px;top:548.50px;font-size:12.6px;color:#ffffff;transform:scaleX(0.9277);">Copy stack trace</span>
<span class="t" style="left:229.00px;top:583.50px;font-size:12.6px;color:#ffffff;transform:scaleX(0.9147);">Copy as PowerShell</span>
<span class="t" style="left:229.00px;top:607.50px;font-size:12.6px;color:#ffffff;transform:scaleX(0.9351);">Copy as fetch</span>
<span class="t" style="left:229.00px;top:631.50px;font-size:12.6px;color:#ffffff;transform:scaleX(0.9335);">Copy as Node.js fetch</span>
<span class="t" style="left:229.00px;top:655.50px;font-size:12.6px;color:#ffffff;transform:scaleX(0.9042);">Copy as cURL (cmd)</span>
<span class="t" style="left:229.00px;top:679.50px;font-size:12.6px;color:#ffffff;transform:scaleX(0.8986);">Copy as cURL (bash)</span>
<span class="t" style="left:229.00px;top:703.50px;font-size:12.6px;color:#ffffff;transform:scaleX(0.9169);">Copy all as PowerShell</span>
<span class="t" style="left:229.00px;top:727.50px;font-size:12.6px;color:#ffffff;transform:scaleX(0.9345);">Copy all as fetch</span>
<span class="t" style="left:229.00px;top:751.50px;font-size:12.6px;color:#ffffff;transform:scaleX(0.9333);">Copy all as Node.js fetch</span>
<span class="t" style="left:229.00px;top:775.50px;font-size:12.6px;color:#ffffff;transform:scaleX(0.9076);">Copy all as cURL (cmd)</span>
<span class="t" style="left:229.00px;top:799.50px;font-size:12.6px;color:#ffffff;transform:scaleX(0.9025);">Copy all as cURL (bash)</span>
<span class="t" style="left:229.00px;top:823.50px;font-size:12.6px;color:#ffffff;transform:scaleX(0.9102);">Copy all as HAR</span>
</body></html>
